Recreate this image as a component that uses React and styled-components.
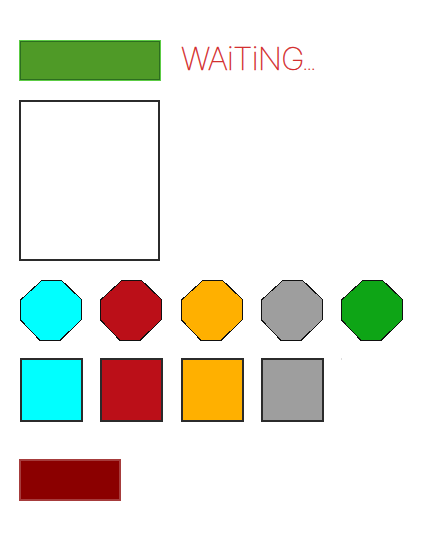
import React from "react";
import styled, { createGlobalStyle } from "styled-components";

const Global = createGlobalStyle`
  html, body { margin: 0; padding: 0; background: #fff; }
`;

const Page = styled.div`
  width: 440px;
  height: 538px;
  box-sizing: border-box;
  padding: 40px 0 0 19px;
  display: flex;
  flex-direction: column;
  align-items: flex-start;
`;

const Header = styled.div`
  display: flex;
  align-items: flex-start;
  gap: 20px;
`;

const GoBar = styled.div`
  width: 142px;
  height: 41px;
  box-sizing: border-box;
  background: #4f9a27;
  border: 2px solid #2c6e1f;
  outline: 1px solid #5ccc45;
  outline-offset: -1px;
`;

const Status = styled.div`
  font-family: Inter, "Liberation Sans", sans-serif;
  font-weight: 100;
  font-size: 31.5px;
  line-height: 38px;
  color: #d32a2a;
  letter-spacing: -0.8px;
  white-space: nowrap;
  -webkit-text-stroke: 0.5px #d32a2a;
`;

const Dots = styled.span`
  font-size: 12px;
  line-height: 0;
  letter-spacing: 0.5px;
  font-weight: 400;
  -webkit-text-stroke: 0;
`;

const Canvas = styled.div`
  width: 141px;
  height: 161px;
  box-sizing: border-box;
  margin-top: 19px;
  border: 2px solid #2b2b2b;
  background: #fff;
`;

const Row = styled.div`
  display: flex;
  gap: 17.25px;
  margin-top: ${(p) => p.$top}px;
  margin-left: 1px;
`;

const Octagon = styled.svg`
  display: block;
  width: 63px;
  height: 62px;
  overflow: visible;
`;

const Swatch = styled.div`
  width: 63px;
  height: 64px;
  box-sizing: border-box;
  background: ${(p) => p.$color};
  border: 2px solid #2b2b2b;
`;

const Speck = styled.div`
  width: 1px;
  height: 2px;
  background: #ddd;
`;

const StopBar = styled.div`
  width: 102px;
  height: 42px;
  box-sizing: border-box;
  margin-top: 37px;
  background: #8b0000;
  border: 2px solid #a63c3c;
`;

const octColors = ["#00ffff", "#bb0f18", "#ffb000", "#9e9e9e", "#0ea516"];
const swatchColors = ["#00ffff", "#bb0f18", "#ffb000", "#9e9e9e"];

export default function App() {
  return (
    <>
      <Global />
      <Page>
        <Header>
          <GoBar />
          <Status>
            WAiTiNG<Dots>...</Dots>
          </Status>
        </Header>
        <Canvas />
        <Row $top={19}>
          {octColors.map((c) => (
            <Octagon key={c} viewBox="0 0 63 62">
              <polygon
                points="21.7,0.5 41.7,0.5 62,20 61,40 40,60.5 20,60.5 0.5,40 0.5,20"
                fill={c}
                stroke="#111"
                strokeWidth="1"
                shapeRendering="crispEdges"
              />
            </Octagon>
          ))}
        </Row>
        <Row $top={16}>
          {swatchColors.map((c) => (
            <Swatch key={c} $color={c} />
          ))}
          <Speck />
        </Row>
        <StopBar />
      </Page>
    </>
  );
}
